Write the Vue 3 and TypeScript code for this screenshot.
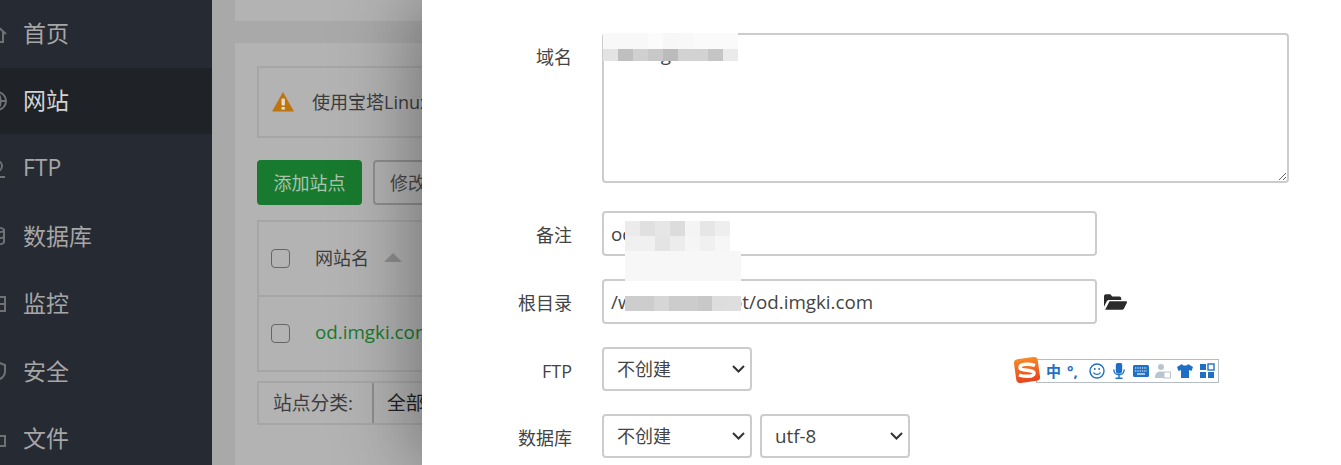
<template>
  <div class="page">
    <aside class="sidebar">
      <a v-for="item in navItems" :key="item.label" class="nav-item" :class="{ active: item.active }">
        <svg class="nav-icon" viewBox="0 0 20 20" fill="none" stroke="currentColor" stroke-width="2">
          <path :d="item.icon" />
        </svg>
        <span class="nav-text">{{ item.label }}</span>
      </a>
    </aside>

    <main class="main">
      <div class="top-card"></div>
      <section class="card">
        <div class="alert">
          <svg class="warn" viewBox="0 0 22 20">
            <path d="M11 0 22 19.5H0Z" fill="#bd7510" />
            <rect x="9.5" y="6.5" width="3.4" height="7" rx="1" fill="#e8dcc8" />
            <rect x="9.5" y="15" width="3.4" height="2.6" fill="#e8dcc8" />
          </svg>
          <span class="lift">使用宝塔Linux面板创建站点</span>
        </div>
        <div class="actions">
          <button class="btn primary">添加站点</button>
          <button class="btn">修改默认页</button>
        </div>
        <div class="table">
          <div class="row head">
            <span class="check"></span>
            <span class="lift">网站名</span>
            <span class="sort"></span>
          </div>
          <div class="row">
            <span class="check"></span>
            <a class="site lift">od.imgki.com</a>
          </div>
        </div>
        <div class="category">
          <span class="cat-label lift">站点分类:</span>
          <span class="cat-value"><span class="lift">全部分类</span></span>
        </div>
      </section>
    </main>

    <div class="modal">
      <form class="form">
        <label class="field">
          <span class="label">域名</span>
          <textarea class="control area" readonly>od.imgki.com</textarea>
        </label>
        <label class="field">
          <span class="label">备注</span>
          <input class="control text" readonly value="od.imgki" />
        </label>
        <div class="field">
          <span class="label">根目录</span>
          <input class="control text" readonly value="/www/wwwroot/od.imgki.com" />
          <svg class="folder" viewBox="0 0 24 16">
            <path d="M0 2.2C0 1 .9 0 2 0h4.600l2 2.200h7.400c1.100 0 2 .9 2 2V6H5.600c-1.300 0-2.500.7-3.100 1.900L0 13Z" fill="#2b2b2b" />
            <path d="M5.800 7.200H23c.8 0 1.300.8.900 1.500l-3 6.100c-.3.700-1 1.200-1.800 1.200H1.200Z" fill="#2b2b2b" />
          </svg>
        </div>
        <label class="field">
          <span class="label">FTP</span>
          <span class="pick-wrap">
            <select class="control pick"><option>不创建</option></select>
            <svg class="chevron" viewBox="0 0 13 8"><path d="M1 1l5.500 5.500L12 1" /></svg>
          </span>
        </label>
        <label class="field">
          <span class="label">数据库</span>
          <span class="pick-wrap">
            <select class="control pick"><option>不创建</option></select>
            <svg class="chevron" viewBox="0 0 13 8"><path d="M1 1l5.500 5.500L12 1" /></svg>
          </span>
          <span class="pick-wrap">
            <select class="control pick latin"><option>utf-8</option></select>
            <svg class="chevron" viewBox="0 0 13 8"><path d="M1 1l5.500 5.500L12 1" /></svg>
          </span>
        </label>
      </form>

      <!-- pixelated redactions that sit over the fields -->
      <div v-for="(m, i) in mosaics" :key="i" class="mosaic" :style="{ left: m.x + 'px', top: m.y + 'px' }">
        <div v-for="(r, j) in m.rows" :key="j" class="mosaic-row" :style="{ height: r.h + 'px' }">
          <i v-for="(c, k) in r.cells" :key="k" :style="{ background: c, width: (r.w ?? 15) + 'px' }"></i>
        </div>
      </div>

      <div class="ime">
        <svg class="ime-logo" viewBox="0 0 30 30">
          <defs>
            <linearGradient id="imeLogo" x1="0" y1="0" x2="0" y2="1">
              <stop offset="0" stop-color="#f58a2a" />
              <stop offset="1" stop-color="#e8431b" />
            </linearGradient>
          </defs>
          <rect x="3" y="3" width="24" height="24" rx="4" fill="url(#imeLogo)" transform="rotate(-8 15 15)" />
          <path d="M23 10.500C18 8.500 8 8.500 8 12.500 8 16.500 22.500 14 22 18.500 21.500 22 12 22 7 20" fill="none" stroke="#fff" stroke-width="3.500" />
        </svg>
        <span class="ime-zh">中</span>
        <span class="ime-punc">°,</span>
        <svg class="ime-icon" viewBox="0 0 16 16" fill="none" stroke="#1f6fc4" stroke-width="1.400">
          <circle cx="8" cy="8" r="7" />
          <path d="M4.500 9.500c1.500 2.500 5.500 2.500 7 0" />
          <path d="M5.800 5v2M10.200 5v2" />
        </svg>
        <svg class="ime-icon" viewBox="0 0 16 16" fill="none" stroke="#1f6fc4" stroke-width="1.400">
          <rect x="5.500" y="0" width="5" height="10" rx="2.500" fill="#1f6fc4" />
          <path d="M2.800 6.500c0 7 10.400 7 10.400 0M8 12v3M4.500 15.300h7" />
        </svg>
        <svg class="ime-icon" viewBox="0 0 16 16">
          <rect x="0" y="2" width="16" height="12" rx="1.500" fill="#1f6fc4" />
          <path d="M2 5h12M2 8h12" stroke="#fff" stroke-width="1.200" stroke-dasharray="1.300 1" />
          <path d="M4 11h8" stroke="#fff" stroke-width="1.200" />
        </svg>
        <svg class="ime-icon" viewBox="0 0 16 16">
          <circle cx="6" cy="4" r="3" fill="#b9c4cf" />
          <path d="M0 15c0-5 2-6.500 6-6.500 1.500 0 2 .2 3 .6V15Z" fill="#b9c4cf" />
          <rect x="9" y="9" width="6.500" height="6" fill="#fff" stroke="#b9c4cf" />
        </svg>
        <svg class="ime-icon" viewBox="0 0 16 16">
          <path d="M5 1 0 4l1.500 4L4 7v8h8V7l2.500 1L16 4l-5-3c-.5 2-5.500 2-6 0Z" fill="#1f6fc4" />
        </svg>
        <svg class="ime-icon" viewBox="0 0 16 16" fill="#1f6fc4">
          <rect x="1" y="1" width="6" height="6" />
          <rect x="9" y="1" width="6" height="6" fill="#fff" stroke="#1f6fc4" stroke-width="1.400" />
          <rect x="1" y="9" width="6" height="6" />
          <rect x="9" y="9" width="6" height="6" />
        </svg>
      </div>
    </div>
  </div>
</template>

<script setup lang="ts">
interface MosaicRow {
  h: number
  w?: number
  cells: string[]
}

interface Mosaic {
  x: number
  y: number
  rows: MosaicRow[]
}

const navItems = [
  { label: '首页', icon: 'M1 10 10 2l9 8M4 8v10h12V8' },
  { label: '网站', active: true, icon: 'M10 1a9 9 0 1 0 0 18 9 9 0 0 0 0-18ZM1 10h18M10 1c-5 5-5 13 0 18M10 1c5 5 5 13 0 18' },
  { label: 'FTP', icon: 'M10 2a5 5 0 1 0 0 10 5 5 0 0 0 0-10ZM2 18h16M10 12v6' },
  { label: '数据库', icon: 'M3 4c0-3 14-3 14 0v12c0 3-14 3-14 0ZM3 4c0 3 14 3 14 0M3 10c0 3 14 3 14 0' },
  { label: '监控', icon: 'M2 3h16v14H2ZM2 10h16' },
  { label: '安全', icon: 'M10 1 2 4v6c0 5 4 8 8 9 4-1 8-4 8-9V4Z' },
  { label: '文件', icon: 'M2 5h6l2 2h8v10H2Z' }
]

const mosaics: Mosaic[] = [
  {
    x: 181,
    y: 33,
    rows: [
      { h: 16, cells: ['#f8f8f8', '#f8f8f8', '#f8f8f8', '#fbfbfb', '#f7f7f7', '#f8f8f8', '#fafafa', '#fafafa', '#fafafa'] },
      { h: 12, cells: ['#e3e3e3', '#bfbfbf', '#d0d0d0', '#c8c8c8', '#bbbbbb', '#d2d2d2', '#d2d2d2', '#c5c5c5', '#eaeaea'] }
    ]
  },
  {
    x: 203,
    y: 221,
    rows: [
      { h: 15, cells: ['#ebebeb', '#e0e0e0', '#e6e6e6', '#dcdcdc', '#f4f4f4', '#e6e6e6', '#eeeeee'] },
      { h: 15, cells: ['#f0f0f0', '#f0f0f0', '#e4e4e4', '#ececec', '#f5f5f5', '#f0f0f0', '#f6f6f6'] },
      { h: 30, w: 116, cells: ['#f7f7f7'] }
    ]
  },
  {
    x: 203,
    y: 296,
    rows: [
      { h: 15, w: 14.5, cells: ['#cdcdcd', '#cdcdcd', '#d6d6d6', '#cccccc', '#cccccc', '#c8c8c8', '#dddddd', '#dedede'] }
    ]
  }
]
</script>

<style scoped>
.page {
  position: relative;
  display: flex;
  width: 1341px;
  height: 465px;
  overflow: hidden;
  font-family: "Open Sans", "Noto Sans CJK SC", sans-serif;
  font-size: 18px;
  color: #3d3d3d;
  background: #a9a9a9;
}

.sidebar { flex: 0 0 212px; background: #262a33; }
.nav-item {
  display: flex;
  align-items: center;
  gap: 16px;
  height: 67.5px;
  font-size: 23px;
  color: #a6a6a6;
}
.nav-item.active { height: 66px; margin-bottom: 1.5px; background: #1f2227; color: #d2d2d2; }
.nav-icon { flex: none; width: 20px; height: 20px; margin-left: -13px; color: #6f7175; }
.nav-text { margin-top: -3px; }

.main { flex: 1; min-width: 0; padding: 0 0 0 23px; }
.top-card { height: 21px; margin-bottom: 22px; background: #b3b3b3; }
.card { height: 440px; padding: 23px 0 0 22px; background: #b3b3b3; }
.lift { margin-top: -3px; }

.alert {
  display: flex;
  align-items: center;
  gap: 18px;
  height: 72px;
  padding-left: 13px;
  margin-bottom: 22px;
  border: 2px solid #a6a6a6;
  white-space: nowrap;
  box-sizing: border-box;
}
.warn { flex: none; width: 22px; height: 20px; margin-top: -1px; }

.actions { display: flex; gap: 11px; margin-bottom: 15px; }
.btn {
  height: 45px;
  padding: 0 15px 2px;
  border: 2px solid #8e8e8e;
  border-radius: 4px;
  background: #b3b3b3;
  color: #4a4a4a;
  font: inherit;
  white-space: nowrap;
}
.btn.primary { width: 105px; padding: 0 0 2px; border: 0; background: #187a2e; color: #a9c4ae; }

.table { border: 2px solid #a6a6a6; margin-bottom: 9px; }
.row {
  display: flex;
  align-items: center;
  gap: 15px;
  height: 73px;
  padding-left: 12px;
  box-sizing: border-box;
  white-space: nowrap;
}
.row.head { height: 75px; border-bottom: 2px solid #a6a6a6; }
.check {
  flex: none;
  width: 19px;
  height: 19px;
  border: 1px solid #666;
  border-radius: 4px;
  box-sizing: border-box;
  margin-right: 10px;
}
.sort {
  width: 0;
  height: 0;
  margin-top: -3px;
  border: 9px solid transparent;
  border-top: 0;
  border-bottom: 9px solid #8f8f8f;
}
.site { color: #187a2e; font-size: 18.8px; }

.category {
  display: flex;
  height: 44px;
  font-size: 18.8px;
  border: 2px solid #a6a6a6;
  box-sizing: border-box;
  white-space: nowrap;
}
.cat-label { display: flex; align-items: center; padding: 0 14px; width: 85px; }
.cat-value { display: flex; align-items: center; padding-left: 13px; border-left: 2px solid #8e8e8e; color: #222; }

.modal {
  position: absolute;
  top: 0;
  right: 0;
  bottom: 0;
  left: 422px;
  overflow: hidden;
  background: #fff;
  box-shadow: -10px 0 70px rgba(0, 0, 0, 0.35);
}
.form { display: flex; flex-direction: column; gap: 23px; padding-top: 33px; }
.field { display: flex; align-items: flex-start; gap: 8px; }
.label {
  flex: none;
  width: 150px;
  margin-right: 22px;
  padding-top: 12px;
  line-height: 24px;
  text-align: right;
  color: #444;
}
.control {
  box-sizing: border-box;
  border: 2px solid #ccc;
  border-radius: 4px;
  background: #fff;
  color: #444;
  font: inherit;
  outline: none;
}
.area { width: 687px; height: 150px; margin-bottom: 5px; padding: 6px 7px; font-size: 18.8px; line-height: 26px; }
.text { width: 495px; height: 45px; padding: 0 7px; font-size: 18.8px; }
.folder { flex: none; align-self: center; width: 23px; height: 16px; margin-left: -1px; }

.pick-wrap { position: relative; display: block; width: 150px; height: 44px; }
.pick { display: block; width: 100%; height: 100%; padding: 0 13px; appearance: none; }
.pick.latin { font-size: 18.8px; }
.chevron {
  position: absolute;
  top: 18px;
  right: 7px;
  width: 13px;
  height: 8px;
  fill: none;
  stroke: #333;
  stroke-width: 2;
}

.mosaic { position: absolute; }
.mosaic-row { display: flex; }
.mosaic-row i { display: block; height: 100%; }

.ime {
  position: absolute;
  top: 359px;
  left: 614px;
  display: flex;
  align-items: center;
  gap: 6px;
  width: 183px;
  height: 24px;
  box-sizing: border-box;
  padding-left: 9px;
  border: 1px solid #b6bcc6;
  background: #fff;
}
.ime-logo { position: absolute; top: -5px; left: -25px; width: 30px; height: 30px; }
.ime-zh { width: 15px; font-size: 15px; line-height: 1; font-weight: 700; color: #1f6fc4; }
.ime-punc { width: 16px; font-size: 15px; line-height: 1; font-weight: 700; color: #1f6fc4; }
.ime-icon { flex: none; width: 16px; height: 16px; }
</style>
